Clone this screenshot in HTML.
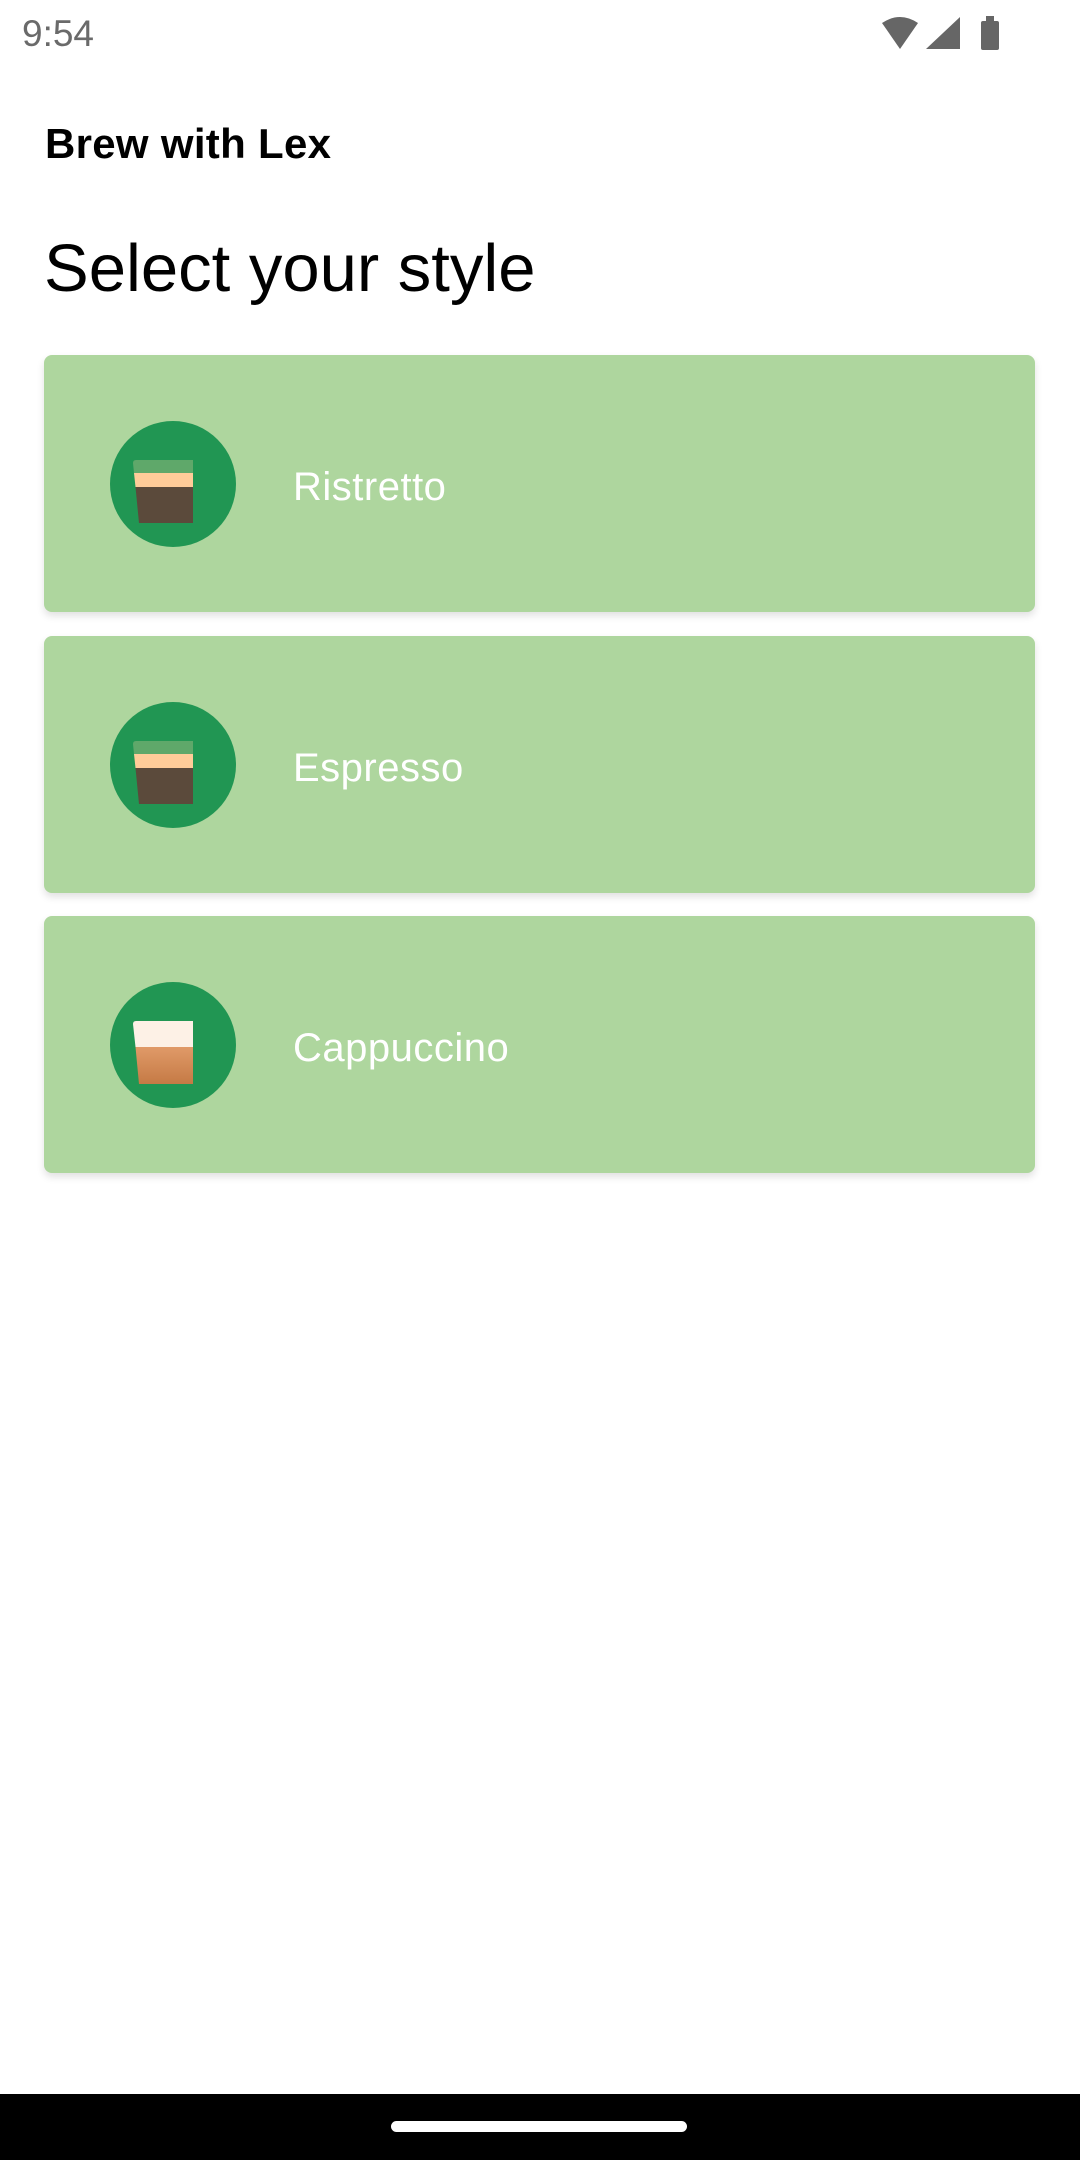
<!DOCTYPE html>
<html><head><meta charset="utf-8"><style>
html,body{margin:0;padding:0}
body{width:1080px;height:2160px;background:#fff;position:relative;overflow:hidden;font-family:"Liberation Sans",sans-serif}
.t{position:absolute;white-space:nowrap}
.card{position:absolute;left:44px;width:991px;height:257px;background:#aed69e;border-radius:8px;box-shadow:0 4px 8px rgba(0,0,0,0.12)}
.circ{position:absolute;left:66px;top:66px;width:126px;height:126px;border-radius:50%;background:#219653}
.cup{position:absolute;left:23px;top:39px}
.lbl{position:absolute;left:249px;top:108px;font-size:40px;color:#fff;letter-spacing:0.5px;line-height:48px}
</style></head><body>
<div class="t" style="left:22px;top:10px;font-size:37px;color:#6a6a6a;line-height:48px">9:54</div>
<svg style="position:absolute;left:880px;top:15px" width="130" height="36" viewBox="0 0 130 36">
<path d="M2 8 Q20 -4 38 8 L20 34 Z" fill="#666"/>
<path d="M46 34 L80 2 L80 34 Z" fill="#666"/>
<rect x="101" y="6" width="18" height="29" rx="2" fill="#666"/><rect x="106" y="1" width="8" height="6" fill="#666"/>
</svg>
<div class="t" style="left:45px;top:119px;font-size:42px;font-weight:bold;color:#000;line-height:50px;letter-spacing:0.3px">Brew with Lex</div>
<div class="t" style="left:44px;top:229px;font-size:67px;color:#000;line-height:80px">Select your style</div>

<div class="card" style="top:355px"><div class="circ"><svg class="cup" width="62" height="64" viewBox="0 0 62 64">
<path d="M0 3 Q0 0 3 0 L60 0 L60 13 L1 13 Z" fill="#5fa86a"/><path d="M1 13 L60 13 L60 27 L2.5 27 Z" fill="#ffcc99"/><path d="M2.5 27 L60 27 L60 63 L6 63 Z" fill="#5b4a3b"/></svg></div><div class="lbl">Ristretto</div></div>

<div class="card" style="top:636px"><div class="circ"><svg class="cup" width="62" height="64" viewBox="0 0 62 64">
<path d="M0 3 Q0 0 3 0 L60 0 L60 13 L1 13 Z" fill="#5fa86a"/><path d="M1 13 L60 13 L60 27 L2.5 27 Z" fill="#ffcc99"/><path d="M2.5 27 L60 27 L60 63 L6 63 Z" fill="#5b4a3b"/></svg></div><div class="lbl">Espresso</div></div>

<div class="card" style="top:916px"><div class="circ"><svg class="cup" width="62" height="64" viewBox="0 0 62 64">
<defs><linearGradient id="g" x1="0" y1="0" x2="0" y2="1"><stop offset="0" stop-color="#e09a68"/><stop offset="1" stop-color="#c57a45"/></linearGradient></defs>
<path d="M0 3 Q0 0 3 0 L60 0 L60 26 L2.5 26 Z" fill="#fdf1e6"/><path d="M2.5 26 L60 26 L60 63 L6 63 Z" fill="url(#g)"/></svg></div><div class="lbl">Cappuccino</div></div>

<div style="position:absolute;left:0;top:2094px;width:1080px;height:66px;background:#000"></div>
<div style="position:absolute;left:391px;top:2121px;width:296px;height:11px;border-radius:6px;background:#fff"></div>
</body></html>
